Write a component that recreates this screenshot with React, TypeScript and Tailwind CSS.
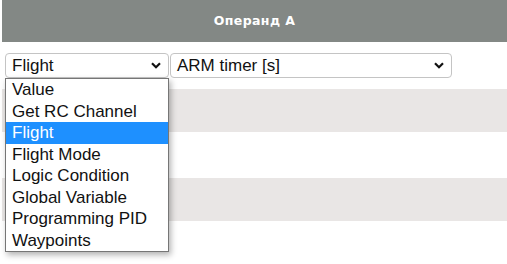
import React from 'react';

const options = [
  'Value',
  'Get RC Channel',
  'Flight',
  'Flight Mode',
  'Logic Condition',
  'Global Variable',
  'Programming PID',
  'Waypoints',
];

const Chevron: React.FC = () => (
  <svg width="10" height="7" viewBox="0 0 10 7" fill="none">
    <path d="M1 1.2L5 5.2L9 1.2" stroke="#111" strokeWidth="2.2" />
  </svg>
);

const Select: React.FC<{ value: string; width: string }> = ({ value, width }) => (
  <div
    className={`${width} h-[25px] flex items-center justify-between pl-[6px] pr-[7px] border border-[#c4c4c4] rounded-[4px] bg-white text-[17px] text-[#111]`}
  >
    <span>{value}</span>
    <Chevron />
  </div>
);

export default function App() {
  return (
    <div
      className="relative w-[507px] h-[264px] overflow-hidden bg-white"
      style={{ fontFamily: '"Liberation Sans", Arial, sans-serif' }}
    >
      <div className="ml-[2px]">
        <div className="h-[42px] bg-[#838885] flex items-center justify-center text-white text-[12.5px] tracking-[0.4px] font-bold font-['DejaVu_Sans',sans-serif]">
          Операнд А
        </div>
        <div className="h-[47px] pt-[11px] pl-[3px] flex gap-[1px]">
          <Select value="Flight" width="w-[164px]" />
          <Select value="ARM timer [s]" width="w-[282px]" />
        </div>
        <div className="h-[43px] bg-[#e9e6e5]" />
        <div className="h-[46px]" />
        <div className="h-[43px] bg-[#e9e6e5]" />
      </div>

      <div className="absolute left-[5px] top-[78px] w-[164px] border border-[#767676] bg-white shadow-[2px_3px_6px_rgba(0,0,0,0.3)]">
        {options.map(opt => (
          <div
            key={opt}
            className={`h-[21.5px] flex items-center pl-[6px] text-[17px] ${
              opt === 'Flight' ? 'bg-[#1e90ff] text-white' : 'text-[#111]'
            }`}
          >
            {opt}
          </div>
        ))}
      </div>
    </div>
  );
}
